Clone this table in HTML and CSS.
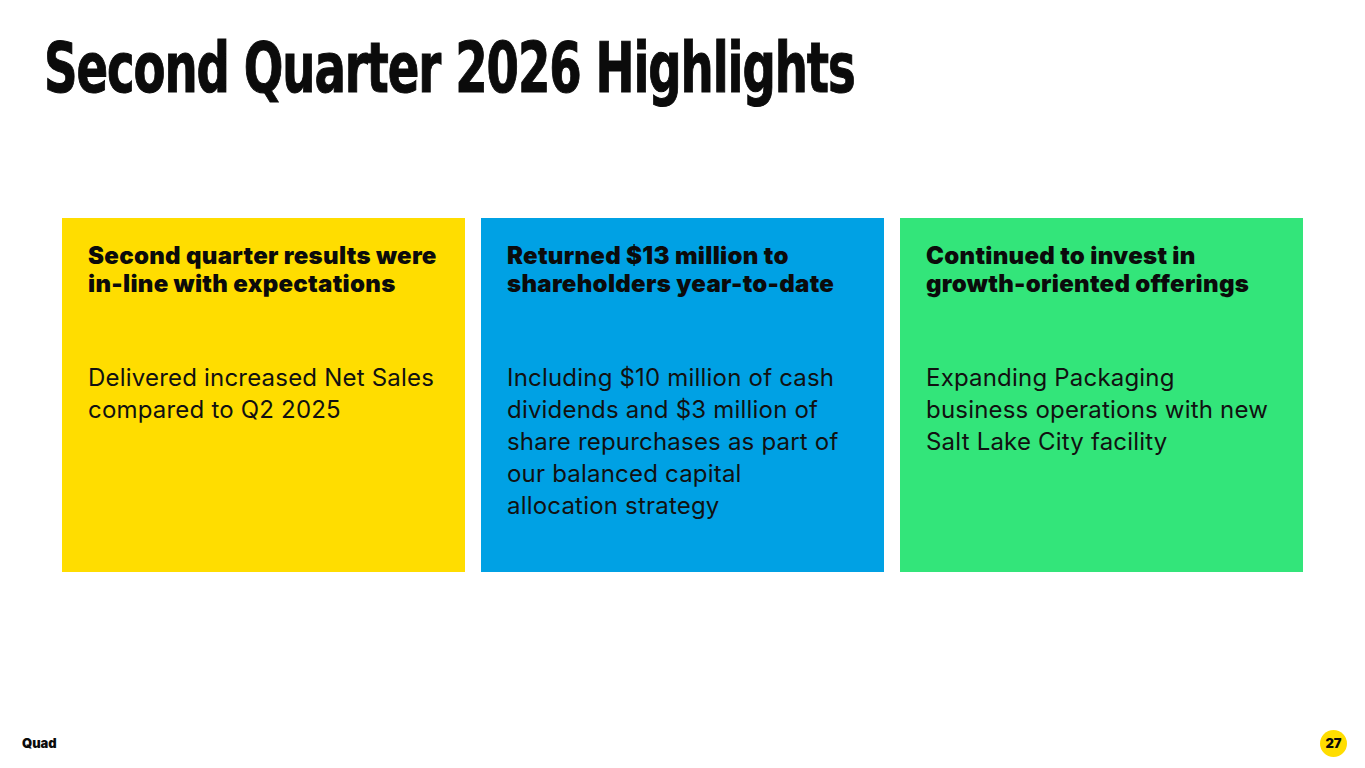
FILE: index.html
```html
<!DOCTYPE html>
<html lang="en">
<head>
<meta charset="utf-8">
<title>Second Quarter 2026 Highlights</title>
<link rel="stylesheet" href="styles.css">
</head>
<body>
<div class="slide">
  <header class="slide-header">
    <h1 class="title"><span class="title-text">Second Quarter 2026 Highlights</span></h1>
  </header>
  <main class="cards">
    <section class="card card-yellow">
      <h2 class="card-heading">Second quarter results were <span class="nb">in-line</span> with expectations</h2>
      <p class="card-body">Delivered increased Net Sales compared to Q2 2025</p>
    </section>
    <section class="card card-blue">
      <h2 class="card-heading">Returned $13 million to shareholders <span class="nb">year-to-date</span></h2>
      <p class="card-body">Including $10 million of cash dividends and $3 million of share repurchases as part of our balanced capital allocation strategy</p>
    </section>
    <section class="card card-green">
      <h2 class="card-heading">Continued to invest in <span class="nb">growth-oriented</span> offerings</h2>
      <p class="card-body">Expanding Packaging business operations with new Salt Lake City facility</p>
    </section>
  </main>
  <footer class="slide-footer">
    <span class="brand">Quad</span>
    <span class="page-num">27</span>
  </footer>
</div>
</body>
</html>
```
FILE: styles.css
```css
* { box-sizing: border-box; }
html, body { margin: 0; padding: 0; background: #ffffff; }
body { font-family: "Inter", "Liberation Sans", sans-serif; color: #0b0b0b; }

.slide {
  width: 1365px;
  height: 768px;
  display: flex;
  flex-direction: column;
  overflow: hidden;
}

.slide-header {
  padding: 30px 0 0 44px;
  height: 218px;
}
.title {
  margin: 0;
  font-family: "DejaVu Sans Condensed", "DejaVu Sans", sans-serif;
  font-weight: 700;
  font-size: 70px;
  line-height: 76px;
  letter-spacing: -1.5px;
  white-space: nowrap;
}
.title-text {
  display: inline-block;
  transform: scaleX(0.74);
  transform-origin: left center;
  -webkit-text-stroke: 1px #0b0b0b;
}

.cards {
  display: flex;
  gap: 16px;
  padding: 0 62px;
  height: 354px;
}
.card {
  flex: 1 1 0;
  padding: 24px 26px 0 26px;
}
.card-yellow { background: #ffdd00; }
.card-blue { background: #00a1e4; }
.card-green { background: #33e57a; }

.nb { white-space: nowrap; display: inline-block; }

.card-heading {
  margin: 0;
  font-family: "Inter", sans-serif;
  font-weight: 900;
  font-size: 24px;
  line-height: 28px;
  letter-spacing: 0.3px;
  max-width: 362px;
}
.card-body {
  margin: 64px 0 0 0;
  font-family: "Inter", sans-serif;
  font-weight: 400;
  font-size: 24px;
  line-height: 32px;
  letter-spacing: 0.2px;
  max-width: 346px;
  color: #111111;
}

.slide-footer {
  margin-top: auto;
  height: 50px;
  display: flex;
  align-items: center;
  justify-content: space-between;
  padding: 0 18px 0 22px;
}
.brand {
  font-family: "Inter", sans-serif;
  font-weight: 900;
  font-size: 13px;
  letter-spacing: -0.1px;
}
.page-num {
  width: 27px;
  height: 27px;
  border-radius: 50%;
  background: #ffdd00;
  display: flex;
  align-items: center;
  justify-content: center;
  font-family: "Inter", sans-serif;
  font-weight: 900;
  font-size: 13px;
}
```
